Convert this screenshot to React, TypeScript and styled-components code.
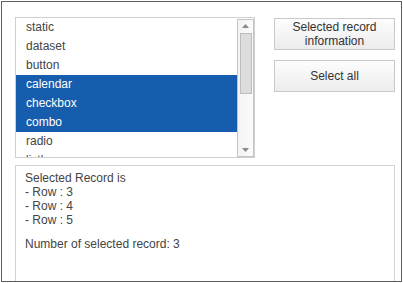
import React from "react";
import styled, { createGlobalStyle } from "styled-components";

const GlobalStyle = createGlobalStyle`
  html, body {
    margin: 0;
    padding: 0;
    background: #ffffff;
  }
  body {
    padding: 1px;
    font-family: "Liberation Sans", Arial, sans-serif;
  }
`;

const Frame = styled.div`
  box-sizing: border-box;
  width: 401px;
  height: 281px;
  border: 1px solid #5e5e5e;
  padding: 15px 6px 0 13px;
  overflow: hidden;
  display: flex;
  flex-direction: column;
  gap: 7px;
  background: #fff;
`;

const TopRow = styled.div`
  display: flex;
  gap: 19px;
  align-items: flex-start;
`;

const ListBox = styled.div`
  box-sizing: border-box;
  width: 240px;
  height: 141px;
  border: 1px solid #cfcfcf;
  display: flex;
  overflow: hidden;
`;

const Items = styled.ul`
  list-style: none;
  margin: 0;
  padding: 0;
  flex: 1;
  overflow: hidden;
`;

const Item = styled.li<{ $selected?: boolean }>`
  height: 19px;
  line-height: 18px;
  padding-left: 10px;
  font-size: 12px;
  color: ${(p) => (p.$selected ? "#ffffff" : "#444444")};
  background: ${(p) => (p.$selected ? "#165dad" : "transparent")};
  white-space: nowrap;
`;

const ScrollBar = styled.div`
  box-sizing: border-box;
  width: 17px;
  margin: 1px 0 0;
  height: 138px;
  border: 1px solid #c4c4c4;
  background: linear-gradient(to right, #f3f3f3, #fbfbfb);
  display: flex;
  flex-direction: column;
  align-items: center;
`;

const Arrow = styled.div`
  height: 12px;
  width: 100%;
  display: flex;
  align-items: center;
  justify-content: center;
  flex-shrink: 0;
`;

const Thumb = styled.div`
  box-sizing: border-box;
  width: 12px;
  height: 61px;
  margin-top: 1px;
  border: 1px solid #bdbdbd;
  background: #dcdcdc;
`;

const Track = styled.div`
  flex: 1;
`;

const ButtonCol = styled.div`
  display: flex;
  flex-direction: column;
  gap: 10px;
  padding-top: 1px;
`;

const Button = styled.button<{ $h: number }>`
  box-sizing: border-box;
  width: 121px;
  height: ${(p) => p.$h}px;
  border: 1px solid #c9c9c9;
  background: linear-gradient(to bottom, #fdfdfd, #ececec);
  color: #333333;
  font-family: "Liberation Sans", Arial, sans-serif;
  font-size: 12px;
  line-height: 14px;
  padding: 0 4px;
  text-align: center;
`;

const InfoBox = styled.div`
  box-sizing: border-box;
  width: 380px;
  flex: 1;
  margin-bottom: -20px;
  border: 1px solid #d2d2d2;
  padding: 5px 9px;
  font-size: 12px;
  line-height: 14px;
  color: #444444;
`;

const InfoLine = styled.div`
  white-space: pre;
`;

const InfoGap = styled.div`
  height: 10px;
`;

const UpIcon = () => (
  <svg width="7" height="4" viewBox="0 0 7 4">
    <path d="M3.5 0 L7 4 L0 4 Z" fill="#8a8a8a" />
  </svg>
);

const DownIcon = () => (
  <svg width="7" height="4" viewBox="0 0 7 4">
    <path d="M0 0 L7 0 L3.5 4 Z" fill="#8a8a8a" />
  </svg>
);

const items = ["static", "dataset", "button", "calendar", "checkbox", "combo", "radio", "listbox"];
const selected = [3, 4, 5];

export default function App() {
  return (
    <>
      <GlobalStyle />
      <Frame>
        <TopRow>
          <ListBox>
            <Items>
              {items.map((it, i) => (
                <Item key={it} $selected={selected.includes(i)}>
                  {it}
                </Item>
              ))}
            </Items>
            <ScrollBar>
              <Arrow>
                <UpIcon />
              </Arrow>
              <Thumb />
              <Track />
              <Arrow>
                <DownIcon />
              </Arrow>
            </ScrollBar>
          </ListBox>
          <ButtonCol>
            <Button $h={32}>
              Selected record
              <br />
              information
            </Button>
            <Button $h={32}>Select all</Button>
          </ButtonCol>
        </TopRow>
        <InfoBox>
          <InfoLine>Selected Record is</InfoLine>
          {selected.map((i) => (
            <InfoLine key={i}>- Row : {i}</InfoLine>
          ))}
          <InfoGap />
          <InfoLine>Number of selected record: {selected.length}</InfoLine>
        </InfoBox>
      </Frame>
    </>
  );
}
